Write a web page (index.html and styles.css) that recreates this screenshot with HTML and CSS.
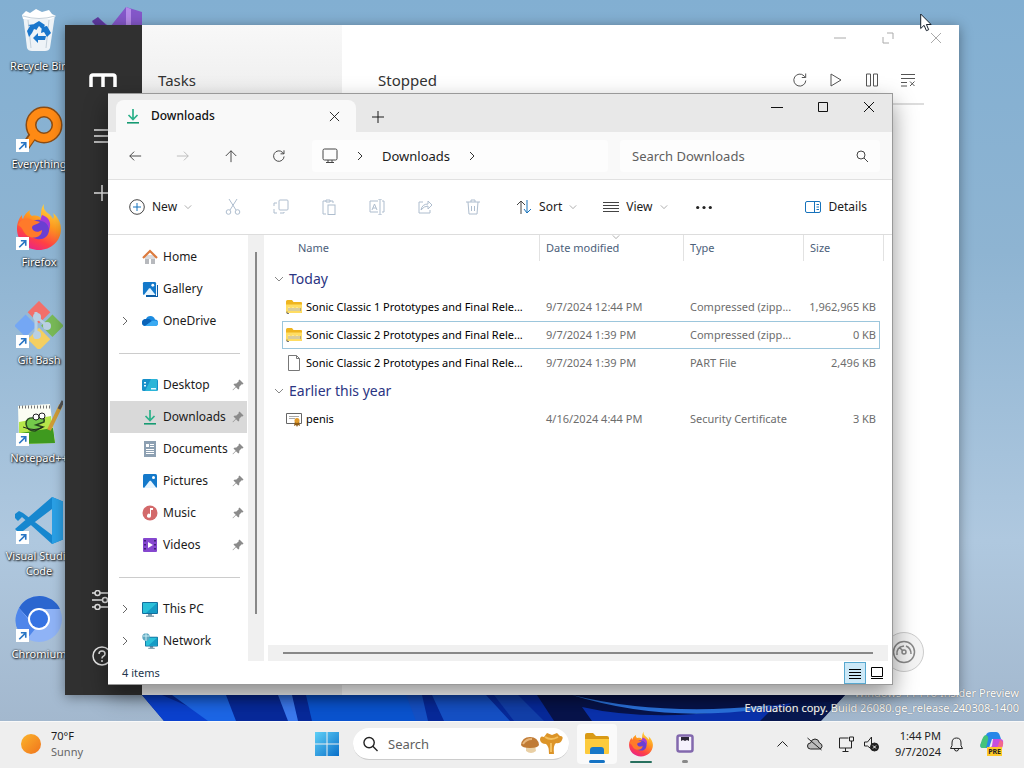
FILE: index.html
```html
<!DOCTYPE html>
<html lang="en">
<head>
<meta charset="utf-8">
<title>Downloads</title>
<link rel="stylesheet" href="styles.css">
</head>
<body>
<svg class="sprite" aria-hidden="true">
  <symbol id="shortcut" viewBox="0 0 12 12"><path fill="#fff" d="M0 0h12v12H0z"/><path d="M3 9.500 8.500 4M4.500 3.500H9V8" fill="none" stroke="#2a76c4" stroke-width="1.500"/></symbol>
  <symbol id="chev-right" viewBox="0 0 10 10"><path d="m3 1 4 4-4 4"/></symbol>
  <symbol id="chev-down" viewBox="0 0 10 10"><path d="m1 3 4 4 4-4"/></symbol>
  <symbol id="close" viewBox="0 0 12 12"><path d="m1 1 10 10M11 1 1 11"/></symbol>
  <symbol id="refresh" viewBox="0 0 16 16"><path d="M13.800 8.500A6 6 0 1 1 12 3.800l1.500 1.500M13.700 1.500v4H9.800"/></symbol>
  <symbol id="pin" viewBox="0 0 12 12"><path d="M7.500.5 11.500 4.500 10.500 5.500 9.700 5.300 7.300 7.700 7.200 9.800 6.300 10.500 4 8.200 1 11.300.5 11 3.700 7.800 1.500 5.600 2.200 4.700 4.400 4.600 6.800 2.200 6.500 1.500Z" fill="#8b8b8b"/></symbol>
  <symbol id="download" viewBox="0 0 16 16"><path d="M8 1v10M3.500 7 8 11.500 12.500 7" fill="none" stroke="#2cb18a" stroke-width="1.700"/><path d="M2 14h12v1.600H2z" fill="#169a72"/></symbol>
  <symbol id="picture" viewBox="0 0 16 16"><rect x="1" y="1" width="14" height="14" rx="1.500" fill="#1479ca"/><path d="m2 15 5.500-7c.5-.5 1-.5 1.500 0l5.500 7z" fill="#e6f5ff"/><circle cx="11.500" cy="4.500" r="1.500" fill="#fff"/></symbol>
  <symbol id="zip" viewBox="0 0 16 16"><path d="M0 2.500Q0 1 1.500 1H6l1.500 2H15q1 0 1 1v9q0 1-1 1H1q-1 0-1-1z" fill="#efb51f"/><path d="M0 5.500h16V13q0 1-1 1H1q-1 0-1-1z" fill="#ffdd63"/><path d="M2 9h13v3H2z" fill="#b3a67f"/><path d="M3 8v4M5 9v3M7 8v4M9 9v3M11 8v4M13 9v3" stroke="#fff2b8"/><path d="M1 12.500v2h2" stroke="#777" fill="none"/></symbol>
  <symbol id="monitor" viewBox="0 0 16 16"><path d="M6 12h4v3H6z" fill="#7896a8"/><path d="M4 14.500h8V16H4z" fill="#8aa4b2"/><rect width="16" height="12" y="1" rx="1" fill="#136f9e"/><path d="M1 2h14v10H1z" fill="#2bc0d9"/><path d="M15 2v10H4z" fill="#169bc5"/></symbol>
  <symbol id="firefox" viewBox="0 0 48 48"><defs><linearGradient id="ff" x1=".8" y1="0" x2=".3" y2="1"><stop offset="0" stop-color="#ffe04a"/><stop offset=".4" stop-color="#ff9a1f"/><stop offset=".75" stop-color="#ff4144"/><stop offset="1" stop-color="#e8238a"/></linearGradient></defs><path d="M29 1c-1 5 1 7 5 10 2 2 3 3 4 5 1-2 1-4 0-6 5 4 8 10 8 16 0 12-10 21-22 21S2 38 2 26c0-6 2-11 5-14 0 2 0 3 1 4 1-4 4-7 7-9-1 3 0 5 2 6 4-1 7 0 9 2 0-6 0-10 3-14Z" fill="url(#ff)"/><path d="M14 27c0-7 5-11 11-10 7 1 10 6 9 11-1 6-6 9-12 8-5-1-8-5-8-9Z" fill="#6a3fd2"/><path d="M3 22c3-6 9-8 14-5 3 1 6 1 8 2-3 3-8 2-8 6 1 4 6 5 10 2 0 6-6 9-12 7C8 32 9 25 3 22Z" fill="#ff7a2a"/><path d="M25 18c6 0 9 5 9 9 3-7 0-13-7-15Z" fill="#a33bd8"/></symbol>
</svg>

<main class="desktop">
  <svg class="bloom" viewBox="0 0 703 60" preserveAspectRatio="none" aria-hidden="true">
    <path d="M0 34h703L678 60H22Z" fill="#07299a"/>
    <path d="M0 34h20l60 26H22Z" fill="#0b41cf"/><path d="M30 34h54l10 26H66Z" fill="#1c66e6"/>
    <path d="M136 34h14l6 26h-10Z" fill="#3b79ee"/><path d="M164 34h110l10 26H170Z" fill="#0a53cf"/>
    <path d="m264 34 10 26h12l-6-26ZM290 34l12 26h66l-24-26Z" fill="#1550c5"/><path d="m352 34 20 26h30l-26-26Z" fill="#123fa9"/>
    <path d="M395 34h308l-24 26H412Z" fill="#07134a"/><path d="M440 46q60 14 150 4l60-8-30 18H450Z" fill="#0a31ac"/><path d="M430 34q90 22 200 10l-10 4q-100 14-190-14Z" fill="#2a72dc"/>
    <path d="M630 48q30-6 66-8l-18 20h-60z" fill="#081850"/>
  </svg>

  <nav class="shortcuts" aria-label="Desktop">
    <a href="#" class="shortcut"><svg viewBox="0 0 48 48"><path d="m8 8 4 33q1 3 5 3h13q4 0 5-3l5-33Z" fill="#eef3f7"/><path d="m7 8 4-4 4 2 6-4 6 3 7-2 3 4 4 2-5 3H8Z" fill="#fff"/><path d="M8 9q16 5 32 0M13 13l3 28M34 13l-3 28" stroke="#c4d0da" fill="none"/><g fill="#1976cc"><path d="m19 17 5-3 6 4-3 4-3-3-2 3-4-2ZM32 19l4 7-4 4-3-5-3 1 1-6ZM30 33h-7v3l-5-5 5-5v3h8ZM14 30l-2-6 3-5-2-1 7-1 2 6-3-1-2 4Z"/></g></svg><span>Recycle Bin</span></a>
    <a href="#" class="shortcut"><svg viewBox="0 0 48 48"><circle cx="29" cy="20" r="13" fill="none" stroke="#8a4c14" stroke-width="11"/><path d="m19 29-9 13" stroke="#8a4c14" stroke-width="9"/><circle cx="29" cy="20" r="13" fill="none" stroke="#ff8a14" stroke-width="8"/><path d="m21 27-10 14" stroke="#ff8a14" stroke-width="6"/><use href="#shortcut" x="1" y="34" width="13" height="13"/></svg><span>Everything</span></a>
    <a href="#" class="shortcut"><svg viewBox="0 0 48 48"><use href="#firefox"/><use href="#shortcut" x="1" y="34" width="13" height="13"/></svg><span>Firefox</span></a>
    <a href="#" class="shortcut"><svg viewBox="0 0 48 48"><g transform="rotate(45 24 24)"><path d="M7 7h16v16H7z" fill="#f26f6a"/><path d="M26 7h16v16H26z" fill="#78b957"/><path d="M7 26h16v16H7z" fill="#74a7f4"/><path d="M26 26h16v16H26z" fill="#f4cf61"/></g><path d="M21 11v27M23 17l9 8" stroke="#b9cfe2" stroke-width="3"/><circle cx="22" cy="16" r="4" fill="#b9cfe2"/><circle cx="22" cy="34" r="4" fill="#b9cfe2"/><circle cx="32" cy="25" r="4" fill="#b9cfe2"/><use href="#shortcut" x="1" y="34" width="13" height="13"/></svg><span>Git Bash</span></a>
    <a href="#" class="shortcut"><svg viewBox="0 0 48 48"><path d="m3 7 32-2 5 38-36 2Z" fill="#fbfdf3"/><path d="m4 23 32-6 4 27-36 1Z" fill="#b6e64a"/><path d="m5 34 33-5 2 15-36 1Z" fill="#3f9a1f"/><path d="M4 8h31" stroke="#777" stroke-dasharray="1 2" stroke-width="3"/><path d="M11 25q0-7 8-6l6-2q5 1 4 6l-8 3 7 2-8 4q-8 0-9-7Z" fill="#74c94b" stroke="#26481f" stroke-width="1.500"/><path d="M8 28q12 5 20 0" stroke="#222" fill="none"/><circle cx="21" cy="18" r="3" fill="#fff" stroke="#222"/><circle cx="27" cy="17" r="3" fill="#fff" stroke="#222"/><path d="M46 6 34 31" stroke="#cf9c36" stroke-width="4"/><path d="m48 2-4 8" stroke="#555" stroke-width="3"/><use href="#shortcut" x="1" y="34" width="13" height="13"/></svg><span>Notepad++</span></a>
    <a href="#" class="shortcut"><svg viewBox="0 0 48 48"><path d="m37 0 12 5v37l-12 5L7 20l-4 4-3-3v-4l4-3 4 2 29 22V12L8 34l-4 2-4-4 37-32Z" fill="#1687cf"/><path d="m37 0 12 5v37l-12 5Z" fill="#2aa0e6"/><use href="#shortcut" x="1" y="34" width="13" height="13"/></svg><span>Visual Studio Code</span></a>
    <a href="#" class="shortcut"><svg viewBox="0 0 48 48"><circle cx="24" cy="24" r="23" fill="#8fb3f6"/><path d="M4 13A23 23 0 0 1 45 14H24Q15 15 14 24Z" fill="#2b66cf"/><path d="M4 13Q-6 32 12 44l8-10q-6-3-7-10Z" fill="#4f86ea"/><circle cx="24" cy="24" r="11" fill="#fff"/><circle cx="24" cy="24" r="9" fill="#3673e2"/><use href="#shortcut" x="1" y="34" width="13" height="13"/></svg><span>Chromium</span></a>
  </nav>
  <svg class="vs-icon" viewBox="0 0 50 48" aria-hidden="true"><path d="m34 0 16 5v38l-16 5L0 15l6-4 12 9Z" fill="#8457c9"/><path d="m34 0 5 2v46l-5-2Z" fill="#b58ae8"/><path d="m0 14 6-4 8 8-6 6Z" fill="#5e3aa0"/></svg>

  <p class="watermark">Windows 11 Pro Insider Preview<br>Evaluation copy. Build 26080.ge_release.240308-1400</p>

  <section class="window manager" aria-label="Tasks">
    <aside class="rail">
      <svg class="rail-logo" viewBox="0 0 28 14"><path d="M2 14V4q0-2 2-2h20q2 0 2 2v10M14 2v12" fill="none" stroke="#fff" stroke-width="3.500"/></svg>
      <button type="button" aria-label="Menu"><svg viewBox="0 0 16 16"><path d="M0 2h16M0 8h16M0 14h16"/></svg></button>
      <button type="button" aria-label="Add"><svg viewBox="0 0 16 16"><path d="M8 0v16M0 8h16"/></svg></button>
      <button type="button" class="push" aria-label="Options"><svg viewBox="0 0 20 20"><path d="M0 3h3m5 0h12M0 10h10m6 0h4M0 17h3m5 0h12"/><circle cx="5.500" cy="3" r="2.500"/><circle cx="13" cy="10" r="2.500"/><circle cx="5.500" cy="17" r="2.500"/></svg></button>
      <button type="button" aria-label="Help"><svg viewBox="0 0 20 20"><circle cx="10" cy="10" r="9"/><path d="M7 8q0-3 3-3t3 3q0 1.500-2 2.500-1 .5-1 2M10 14v2"/></svg></button>
    </aside>
    <div class="task-panel"><h2>Tasks</h2></div>
    <div class="task-main">
      <div class="manager-caption">
        <button type="button" aria-label="Minimize"><svg viewBox="0 0 12 12"><path d="M0 6h12"/></svg></button>
        <button type="button" aria-label="Restore"><svg viewBox="0 0 12 12"><path d="M5 1h6v6M1 5v6h6"/></svg></button>
        <button type="button" aria-label="Close"><svg viewBox="0 0 12 12"><use href="#close"/></svg></button>
      </div>
      <div class="task-head">
        <h2>Stopped</h2>
        <button type="button" aria-label="Refresh"><svg viewBox="0 0 16 16"><use href="#refresh"/></svg></button>
        <button type="button" aria-label="Start"><svg viewBox="0 0 16 16"><path d="m3 2 10 6-10 6Z"/></svg></button>
        <button type="button" aria-label="Pause"><svg viewBox="0 0 16 16"><path d="M2.500 2h4v12h-4zM9.500 2h4v12h-4z"/></svg></button>
        <button type="button" aria-label="Clear list"><svg viewBox="0 0 16 16"><path d="M1 2.500h14M1 6.500h14M1 10.500h6M1 14h6M10 9.500l4.500 4.500m0-4.500L10 14"/></svg></button>
      </div>
      <button type="button" class="speed" aria-label="Speed"><svg viewBox="0 0 24 24"><circle cx="12" cy="12" r="10.500"/><path d="M5 15q-1-8 7-9M14 6q5 2 5 8M7 7l4 4"/><circle cx="12" cy="12" r="2"/></svg></button>
    </div>
  </section>

  <section class="window explorer" aria-label="Downloads">
    <header class="tabbar">
      <div class="tab"><svg class="ico"><use href="#download"/></svg><h1>Downloads</h1><button type="button" aria-label="Close tab"><svg viewBox="0 0 12 12"><use href="#close"/></svg></button></div>
      <button type="button" class="new-tab" aria-label="New tab"><svg viewBox="0 0 12 12"><path d="M6 0v12M0 6h12"/></svg></button>
      <div class="caption">
        <button type="button" aria-label="Minimize"><svg viewBox="0 0 12 12"><path d="M0 6.500h12"/></svg></button>
        <button type="button" aria-label="Maximize"><svg viewBox="0 0 12 12"><path d="M1.500 1.500h9v9h-9z"/></svg></button>
        <button type="button" aria-label="Close"><svg viewBox="0 0 12 12"><use href="#close"/></svg></button>
      </div>
    </header>
    <div class="navbar">
      <div class="nav-buttons">
        <button type="button" aria-label="Back"><svg viewBox="0 0 16 16"><path d="M15 8H2M7 3 2 8l5 5"/></svg></button>
        <button type="button" class="off" aria-label="Forward" disabled><svg viewBox="0 0 16 16"><path d="M1 8h13M9 3l5 5-5 5"/></svg></button>
        <button type="button" aria-label="Up"><svg viewBox="0 0 16 16"><path d="M8 15V2M2 8l6-6 6 6"/></svg></button>
        <button type="button" aria-label="Refresh"><svg viewBox="0 0 16 16"><use href="#refresh"/></svg></button>
      </div>
      <div class="address">
        <svg class="ico line" viewBox="0 0 16 16"><rect x="1" y="1" width="14" height="11" rx="1.500"/><path d="M6 12v2.500M10 12v2.500M4 14.500h8"/></svg>
        <svg class="chev"><use href="#chev-right"/></svg>
        <a href="#">Downloads</a>
        <svg class="chev"><use href="#chev-right"/></svg>
      </div>
      <label class="search"><input type="text" placeholder="Search Downloads" aria-label="Search Downloads"><svg viewBox="0 0 12 12"><circle cx="5" cy="5" r="4"/><path d="m8 8 4 4"/></svg></label>
    </div>
    <div class="toolbar">
      <button type="button" class="new"><svg class="ico line" viewBox="0 0 16 16"><circle cx="8" cy="8" r="7.300"/><path d="M8 4v8M4 8h8" stroke="#1672bb"/></svg>New<svg class="caret"><use href="#chev-down"/></svg></button>
      <div class="edit-tools">
        <button type="button" disabled aria-label="Cut"><svg viewBox="0 0 16 16"><path d="M4 0 11 11M12 0 5 11"/><circle cx="3.500" cy="13" r="2.300"/><circle cx="12.500" cy="13" r="2.300"/></svg></button>
        <button type="button" disabled aria-label="Copy"><svg viewBox="0 0 16 16"><rect x="6" y="1" width="9" height="10" rx="1"/><path d="M4 4H1v3m0 3v4h3m3 0h4v-1"/></svg></button>
        <button type="button" disabled aria-label="Paste"><svg viewBox="0 0 16 16"><path d="M5 15H2V2h3m4 0h3v2M5 1h4v2H5z"/><rect x="7" y="6" width="7" height="9.500"/></svg></button>
        <button type="button" disabled aria-label="Rename"><svg viewBox="0 0 16 16"><path d="M9 2H1v11h8M13 2h2v11h-2M11 0v16M9 0h4M9 16h4M3 11l2.500-6L8 11M4 9h3"/></svg></button>
        <button type="button" disabled aria-label="Share"><svg viewBox="0 0 16 16"><path d="M6 3H2v11h11v-3M4 11q1-6 7-6V2l4 4-4 4V7Q7 7 4 11Z"/></svg></button>
        <button type="button" disabled aria-label="Delete"><svg viewBox="0 0 16 16"><path d="M1 3h14M6 3V1h4v2M3 3l1 12h8l1-12M6.500 7v5M9.500 7v5"/></svg></button>
      </div>
      <button type="button" class="sort"><svg class="ico line" viewBox="0 0 16 16"><path d="M5 15V2M1 6l4-4 4 4"/><path d="M11 1v13m-3-4 3 4 4-4" stroke="#1672bb"/></svg>Sort<svg class="caret"><use href="#chev-down"/></svg></button>
      <button type="button" class="view"><svg class="ico line" viewBox="0 0 16 16"><path d="M0 3.500h16M0 6.500h16M0 9.500h16M0 12.500h16"/></svg>View<svg class="caret"><use href="#chev-down"/></svg></button>
      <button type="button" class="more" aria-label="More"><svg class="ico" viewBox="0 0 16 16"><circle cx="1.700" cy="8.500" r="1.600"/><circle cx="8" cy="8.500" r="1.600"/><circle cx="14.300" cy="8.500" r="1.600"/></svg></button>
      <button type="button" class="details"><svg class="ico line" viewBox="0 0 16 16"><rect x=".5" y="2.500" width="15" height="11" rx="1.500" stroke="#1672bb"/><path d="M9.500 2.500v11M11.500 5.500h2.500M11.500 8h2.500M11.500 10.500h2.500" stroke="#1672bb"/></svg>Details</button>
    </div>
    <div class="body">
      <nav class="places" aria-label="Places">
        <a href="#"><i></i><svg class="ico"><path d="M3 8h4v7H3zM9 8h4v7H9z" fill="#b7b9bd"/><path d="M3 6h10v4H3z" fill="#d9dadd"/><path d="m1 9 7-7 7 7" fill="none" stroke="#dc7b3e" stroke-width="2.200"/></svg>Home</a>
        <a href="#"><i></i><svg class="ico" viewBox="0 0 16 16"><path d="M4 4h12v12H4z" fill="#0b5ca5"/><path d="M14 0h1v15h-1z" fill="#fff"/><use href="#picture" width="15" height="15"/></svg>Gallery</a>
        <a href="#"><svg class="chev"><use href="#chev-right"/></svg><svg class="ico"><path d="M4 13q-4 0-4-3.500Q0 6 4 6q1-3 4.500-3T13 6.500q3 0 3 3.200T13 13Z" fill="#1b8be0"/><path d="M4 6q3-1 6 2l-7 5q-3-.5-3-3.500Q.5 6 4 6Z" fill="#0a63b8"/><path d="M3 13 10 8q6-1 6 2t-3 3Z" fill="#3aaaf2"/></svg>OneDrive</a>
        <hr>
        <a href="#"><i></i><svg class="ico"><rect y="2" width="16" height="12" rx="1.500" fill="#168fc9"/><path d="M9 2h6v12H3Z" fill="#2bb5d8"/><path d="M2 5h2v1.500H2zM2 8h2v1.500H2zM9 11h5v1.500H9z" fill="#e5f8ff"/></svg>Desktop<svg class="pin"><use href="#pin"/></svg></a>
        <a href="#" class="current"><i></i><svg class="ico"><use href="#download"/></svg>Downloads<svg class="pin"><use href="#pin"/></svg></a>
        <a href="#"><i></i><svg class="ico"><path d="M2 0h12v16H2z" fill="#8da0b2"/><path d="M4 3h3v3H4zM8 3h4v1H8zM8 5h4v1H8zM4 8h8v1H4zM4 10h8v1H4zM4 12h8v1H4z" fill="#fff"/></svg>Documents<svg class="pin"><use href="#pin"/></svg></a>
        <a href="#"><i></i><svg class="ico"><use href="#picture"/></svg>Pictures<svg class="pin"><use href="#pin"/></svg></a>
        <a href="#"><i></i><svg class="ico"><circle cx="8" cy="8" r="7.500" fill="#d3696a"/><path d="M8 3h3v2H9v5.500a2 2 0 1 1-1-1.500Z" fill="#fff"/></svg>Music<svg class="pin"><use href="#pin"/></svg></a>
        <a href="#"><i></i><svg class="ico"><rect x="1" y="1" width="14" height="14" rx="1" fill="#8547cf"/><path d="M2 3h2v1.500H2zM2 7h2v1.500H2zM2 11h2v1.500H2zM12 3h2v1.500h-2zM12 7h2v1.500h-2zM12 11h2v1.500h-2z" fill="#402079"/><path d="m6 5 5 3-5 3Z" fill="#fff"/></svg>Videos<svg class="pin"><use href="#pin"/></svg></a>
        <hr>
        <a href="#"><svg class="chev"><use href="#chev-right"/></svg><svg class="ico"><use href="#monitor"/></svg>This PC</a>
        <a href="#"><svg class="chev"><use href="#chev-right"/></svg><svg class="ico" viewBox="0 0 16 16"><use href="#monitor" x="3" y="3" width="13" height="13"/><circle cx="4" cy="4" r="3.700" fill="#5fa7c0"/><path d="M1 3h6M4 0v8" stroke="#c9edf4"/></svg>Network</a>
      </nav>
      <div class="vscroll"><span></span></div>
      <div class="files">
        <table>
          <colgroup><col class="c-gutter"><col><col class="c-date"><col class="c-type"><col class="c-size"><col class="c-end"></colgroup>
          <thead><tr><td></td><th scope="col" class="h-name">Name</th><th scope="col" class="sorted">Date modified<svg class="caret"><use href="#chev-down"/></svg></th><th scope="col">Type</th><th scope="col">Size</th><td class="edge"></td></tr></thead>
          <tbody>
            <tr class="group"><th colspan="6"><button type="button"><svg class="chev"><use href="#chev-down"/></svg>Today</button></th></tr>
            <tr><td></td><td class="name"><div><svg class="ico"><use href="#zip"/></svg>Sonic Classic 1 Prototypes and Final Rele...</div></td><td>9/7/2024 12:44 PM</td><td>Compressed (zipp...</td><td class="size">1,962,965 KB</td><td></td></tr>
            <tr class="focused"><td></td><td class="name"><div><svg class="ico"><use href="#zip"/></svg>Sonic Classic 2 Prototypes and Final Rele...</div></td><td>9/7/2024 1:39 PM</td><td>Compressed (zipp...</td><td class="size">0 KB</td><td></td></tr>
            <tr><td></td><td class="name"><div><svg class="ico"><path d="M2.500.5h8l3 3v12h-11zM10.500.5v3h3" fill="#fff" stroke="#777"/></svg>Sonic Classic 2 Prototypes and Final Rele...</div></td><td>9/7/2024 1:39 PM</td><td>PART File</td><td class="size">2,496 KB</td><td></td></tr>
            <tr class="group"><th colspan="6"><button type="button"><svg class="chev"><use href="#chev-down"/></svg>Earlier this year</button></th></tr>
            <tr><td></td><td class="name"><div><svg class="ico"><path d="M.5 2.500h15v10H.5z" fill="#fff" stroke="#666"/><path d="M3 5.500h10M3 7.500h6" stroke="#aaa"/><path d="m9 10-1 5 2-1 1 2 1-2 2 1-1-5Z" fill="#8d5b16"/><circle cx="11" cy="9.500" r="2.500" fill="#e09a2b"/></svg>penis</div></td><td>4/16/2024 4:44 PM</td><td>Security Certificate</td><td class="size">3 KB</td><td></td></tr>
          </tbody>
        </table>
        <div class="hscroll"><span></span></div>
      </div>
    </div>
    <footer class="status"><span>4 items</span>
      <button type="button" class="on" aria-label="Details view"><svg viewBox="0 0 14 14"><path d="M1 3.500h12M1 6.500h12M1 9.500h12M1 12.500h12"/></svg></button>
      <button type="button" aria-label="Large icons"><svg viewBox="0 0 14 14"><path d="M1.500 1.500h11v9h-11zM1 12.500h12"/></svg></button>
    </footer>
  </section>

  <svg class="cursor" viewBox="0 0 12 19" aria-hidden="true"><path d="M.7 1v14.500l3.400-3.200 2.300 5.400 2.300-1-2.300-5.200h4.700Z" fill="#fff" stroke="#16202c"/></svg>
</main>

<footer class="taskbar">
  <a href="#" class="weather"><svg viewBox="0 0 20 20"><defs><linearGradient id="sun" x2="1" y2="1"><stop stop-color="#fbb52c"/><stop offset="1" stop-color="#f0731c"/></linearGradient></defs><circle cx="10" cy="10" r="10" fill="url(#sun)"/></svg><span>70°F<small>Sunny</small></span></a>
  <div class="apps">
    <button type="button" class="start" aria-label="Start"><svg viewBox="0 0 24 24"><defs><linearGradient id="win" x2="1" y2="1"><stop stop-color="#5fd0f7"/><stop offset="1" stop-color="#0a6fc9"/></linearGradient></defs><path d="M0 0h11.500v11.500H0zM12.500 0H24v11.500H12.500zM0 12.500h11.500V24H0zM12.500 12.500H24V24H12.500z" fill="url(#win)"/></svg></button>
    <label class="tb-search"><svg viewBox="0 0 16 16"><circle cx="6.500" cy="6.500" r="5.500"/><path d="m10.500 10.500 5 5"/></svg><input type="text" placeholder="Search" aria-label="Search"><svg class="mushrooms" viewBox="0 0 44 24"><path d="M6 13h9l1 6q-5 4-10 0Z" fill="#e9cfa4"/><path d="M1 13Q2 5 10 5t9 8q-1 3-9 3t-9-3Z" fill="#c07b35"/><path d="M3 12q3-5 9-5" stroke="#e8b67a" fill="none" stroke-width="2"/><path d="M20 8q0-5 4-3l3-4 5 2 5-2 3 3q4 0 2 4t-6 3q-3 2-2 11h-5q0-8-3-10-5 0-6-4Z" fill="#dc9428"/><path d="M31 11v9M25 5q6 4 13 0" stroke="#f4bf5c" fill="none" stroke-width="2"/></svg></label>
    <button type="button" class="app active" aria-label="File Explorer"><svg viewBox="0 0 26 26"><path d="M1 4q0-2 2-2h6l3 3h11q2 0 2 2v4H1z" fill="#d99a16"/><path d="M1 8h24v14q0 1-1 1H2q-1 0-1-1z" fill="#fdcb3d"/><path d="M6 23v-4q0-3 3-3h8q3 0 3 3v4z" fill="#1878c8"/></svg></button>
    <button type="button" class="app running" aria-label="Firefox"><svg viewBox="0 0 48 48"><use href="#firefox"/></svg></button>
    <button type="button" class="app idle" aria-label="Download manager"><svg viewBox="0 0 26 26"><rect x="5.500" y="4.500" width="15" height="16" rx="2" fill="#f6f2fc" stroke="#8268ad" stroke-width="2.500"/><path d="M9 6h8v4l-2-1-2 1-2-1-2 1z" fill="#2c2736"/></svg></button>
  </div>
  <div class="tray">
    <button type="button" aria-label="Show hidden icons"><svg viewBox="0 0 16 16"><path d="m3 10.500 5-5 5 5"/></svg></button>
    <button type="button" aria-label="Cloud sync off"><svg viewBox="0 0 16 16"><path d="M4 13q-3 0-3-3t3-3q1-4 4.500-4T13 7q3 1 2.500 3.500T13 13Z" fill="#bbb"/><path d="m1 2 14 12"/></svg></button>
    <div class="net"><svg viewBox="0 0 16 16"><path d="M10 2H1v10h12V8M7 12v3M4 15.500h6M11 1h4v4h-4zM13 5v4"/></svg><svg viewBox="0 0 16 16"><path d="M8 1v12L4 10H1V6h3Z"/><circle cx="11" cy="11" r="4" fill="#222"/><path d="m9.500 9.500 3 3m0-3-3 3" stroke="#fff"/></svg></div>
    <time datetime="2024-09-07T13:44">1:44 PM<br>9/7/2024</time>
    <button type="button" aria-label="Notifications"><svg viewBox="0 0 16 16"><path d="M2 12.500h12l-1.500-3V7Q12.500 2 8 2T3.500 7v2.500ZM6 13q0 2 2 2t2-2"/></svg></button>
    <button type="button" class="copilot" aria-label="Copilot preview"><svg viewBox="0 0 24 24"><path d="M6 3q1-3 5-3h5q3 0 4 4l1 3h-9L9 16H3q-4 0-2-5Z" fill="#2787e8"/><path d="M1 11q2-8 5-8 3 1 2 5l-2 8H3q-4 0-2-5Z" fill="#44c37a"/><path d="M13 7h7q4 0 3 5l-2 7q-1 4-5 4h-5q-3 0-4-4l5-5Z" fill="#c64fe0"/><path d="M20 8q4 1 3 5l-2 6H11l6-3Z" fill="#f3688d"/></svg><b>PRE</b></button>
  </div>
</footer>
</body>
</html>
```
FILE: styles.css
```css
* { box-sizing: border-box; }
html, body { height: 100%; margin: 0; }
body {
  display: flex;
  flex-direction: column;
  overflow: hidden;
  font: 12px/16px "Noto Sans", "Open Sans", sans-serif;
  color: #1b1b1b;
  background: #ededed;
}
button { border: 0; padding: 0; background: none; font: inherit; color: inherit; display: flex; align-items: center; justify-content: center; }
a { color: inherit; text-decoration: none; }
h1, h2, p { margin: 0; font-weight: 400; }
svg { flex: none; fill: none; stroke: none; }
button > svg { stroke: currentColor; width: 16px; height: 16px; }
.sprite { position: absolute; width: 0; height: 0; }
.ico { width: 16px; height: 16px; }
.line { stroke: #444; }
.chev { width: 10px; height: 10px; stroke: #666; }
.caret { width: 8px; height: 8px; stroke: #999; }

.desktop {
  flex: 1;
  position: relative;
  overflow: hidden;
  background: linear-gradient(180deg, #82afd2 0%, #8eb4d2 35%, #afc8df 75%, #a3b8ce 100%);
}
.bloom { position: absolute; left: 142px; right: 179px; bottom: 0; width: calc(100% - 321px); height: 60px; }
.shortcuts { display: flex; flex-direction: column; width: 78px; padding-top: 7px; }
.shortcut { height: 98px; display: flex; flex-direction: column; align-items: center; gap: 3px; color: #fff; font-size: 11px; line-height: 15px; text-align: center; text-shadow: 1px 1px 2px #000, 0 0 2px #000; }
.shortcut svg { width: 48px; height: 48px; }
.vs-icon { position: absolute; left: 92px; top: 7px; width: 50px; height: 48px; }
.watermark { position: absolute; right: 5px; bottom: 6px; color: #fff; font-size: 11px; line-height: 15px; text-align: right; text-shadow: 0 0 1px #555; }

.window { position: absolute; display: flex; }
.manager { left: 65px; top: 25px; right: 65px; bottom: 26px; background: #fff; box-shadow: 0 2px 12px rgba(0, 0, 0, .4); overflow: hidden; }
.rail { width: 77px; background: #303030; color: #e8e8e8; display: flex; flex-direction: column; align-items: center; padding: 48px 4px 29px 0; gap: 41px; }
.rail-logo { width: 28px; height: 14px; margin-left: 3px; }
.rail button svg { width: 20px; height: 16px; stroke-width: 1.500; }
.rail button:nth-of-type(n+3) svg { height: 20px; }
.rail .push { margin-top: auto; }
.rail button + .push + button { margin-top: -5px; }
.manager h2 { font-size: 15px; line-height: 22px; color: #333; }
.task-panel { width: 200px; padding: 44px 16px; background: linear-gradient(#f8f8f8, #ededed 80px); }
.task-main { flex: 1; display: flex; flex-direction: column; }
.manager-caption { display: flex; justify-content: flex-end; gap: 36px; height: 26px; padding-right: 17px; align-items: center; color: #aaa; }
.manager-caption svg { width: 12px; height: 12px; }
.task-head { display: flex; align-items: center; gap: 20px; height: 54px; margin: 0 35px 0 36px; padding: 5px 8px 0 0; border-bottom: 2px solid #ddd; color: #555; }
.task-head h2 { flex: 1; }
.speed { margin: auto 35px 23px auto; width: 40px; height: 40px; border: 1px solid #ccc; border-radius: 50%; color: #888; background: #f4f4f4; }
.speed svg { width: 24px; height: 24px; stroke-width: 1.500; }

.explorer { left: 108px; top: 93px; right: 131px; bottom: 36px; flex-direction: column; background: #fff; border: 1px solid #999; border-width: 1px 1px 1px 0; box-shadow: 0 10px 22px rgba(0, 0, 0, .42); }
.tabbar { display: flex; height: 38px; padding-left: 8px; background: #e8e8e8; }
.tab { display: flex; align-items: center; width: 240px; margin-top: 6px; padding: 0 16px 0 9px; gap: 10px; background: #f9f9f9; border-radius: 8px 8px 0 0; }
.tab h1 { flex: 1; font-size: 12px; font-weight: 500; color: #111; }
.tab button svg { width: 11px; height: 11px; }
.new-tab { margin: 8px 16px 0; }
.new-tab svg { width: 12px; height: 12px; }
.caption { display: flex; margin-left: auto; height: 26px; }
.caption button { width: 46px; color: #111; }
.caption svg { width: 12px; height: 12px; }
.navbar { display: flex; align-items: center; height: 48px; background: #f9f9f9; border-bottom: 1px solid #e1e1e1; padding: 0 12px 0 3px; }
.nav-buttons { display: flex; color: #333; }
.nav-buttons button { width: 48px; height: 32px; }
.nav-buttons svg { width: 14px; height: 14px; }
.nav-buttons .off { color: #b5b5b5; }
.address { flex: 1 1 296px; margin-left: 9px; height: 32px; display: flex; align-items: center; gap: 17px; padding-left: 10px; background: #fdfdfd; border-radius: 4px; font-size: 13px; }
.address .chev { stroke: #333; }
.search { flex: 1 1 260px; margin-left: 12px; height: 32px; display: flex; align-items: center; padding: 0 12px; background: #fdfdfd; border-radius: 4px; font-size: 13px; }
input { flex: 1; min-width: 0; border: 0; padding: 0; background: none; font: inherit; outline: 0; }
input::placeholder { color: #5f5f5f; opacity: 1; }
.search svg { width: 12px; height: 12px; stroke: #444; }
.toolbar { display: flex; align-items: center; height: 55px; padding: 0 25px 0 21px; border-bottom: 1px solid #ddd; }
.toolbar button { gap: 8px; }
.toolbar .new, .toolbar .sort, .toolbar .view { gap: 7px; }
.edit-tools { display: flex; gap: 32px; margin: 0 35px 0 33px; color: #aebdce; }
.view { margin-left: 26px; }
.more { margin-left: 28px; }
.more .ico { fill: #222; stroke: none; }
.toolbar .details { margin-left: auto; gap: 7px; }

.body { flex: 1; min-height: 0; display: flex; }
.places { width: 140px; padding-top: 6px; }
.places a { position: relative; display: flex; align-items: center; height: 32px; margin: 0 1px 0 2px; padding-left: 10px; }
.places a > i { width: 10px; }
.places .ico { margin: 0 5px 0 12px; }
.places hr { margin: 16px 8px 15px 11px; border: 0; border-top: 1px solid #ccc; }
.places .current { background: #d9d9d9; }
.pin { position: absolute; right: 3px; width: 12px; height: 12px; }
.vscroll { width: 16px; background: #f0f0f0; padding: 17px 7px 47px; }
.vscroll span { display: block; width: 2px; height: 100%; background: #888; }
.files { flex: 1; min-width: 0; display: flex; flex-direction: column; }
table { width: calc(100% - 18px); margin-left: 10px; table-layout: fixed; border-collapse: separate; border-spacing: 0; }
.c-gutter { width: 8px; }
.c-date { width: 144px; }
.c-type { width: 120px; }
.c-size { width: 77px; }
.c-end { width: 4px; }
th, td { padding: 0; height: 28px; text-align: left; font-weight: 400; white-space: nowrap; font-size: 11px; }
th:not([colspan]) { padding-left: 6px; }
td { padding-left: 7px; color: #6d6d6d; border: solid transparent; border-width: 1px 0; }
td:first-child, td:last-child { padding: 0; }
thead th, thead td { height: 26px; color: #4c607a; border: 0; }
thead th + th { border-left: 1px solid #e2e2e2; }
thead .edge { border-right: 1px solid #e2e2e2; }
thead th.h-name { padding-left: 16px; }
.sorted { position: relative; }
.sorted .caret { position: absolute; left: 50%; top: -2px; }
.group th { height: 28px; }
.group:first-child th { height: 32px; padding-top: 4px; }
.group button { gap: 5px; font-size: 14px; line-height: 20px; color: #2b3583; }
.group .chev { width: 10px; height: 10px; stroke: #888; }
td.name { padding-left: 3px; color: #000; border-left-width: 1px; }
.name div { display: flex; align-items: center; gap: 4px; }
td.size { text-align: right; padding: 0 3px 0 0; border-right-width: 1px; }
.focused td:not(:first-child):not(:last-child) { border-color: #9cc6dc; }
.hscroll { margin: auto 4px 0; height: 16px; padding: 7px 15px; background: #f0f0f0; }
.hscroll span { display: block; height: 2px; background: #888; }
.status { display: flex; align-items: center; height: 23px; padding: 0 4px 0 14px; color: #24364d; }
.status span { flex: 1; font-size: 11px; }
.status button { width: 22px; height: 22px; border: 1px solid transparent; color: #000; }
.status svg { width: 14px; height: 14px; }
.status .on { background: #cce8f7; border-color: #58a8cf; }

.cursor { position: absolute; left: 920px; top: 13px; width: 12px; height: 19px; }

.taskbar { display: grid; grid-template-columns: 1fr auto 1fr; align-items: center; height: 47px; padding: 0 20px 2px 21px; background: #eee; border-top: 1px solid #f9f9f9; }
.weather { display: flex; align-items: center; gap: 10px; font-size: 11px; }
.weather svg { width: 20px; height: 20px; }
.weather small { display: block; font-size: 11px; color: #666; }
.apps { display: flex; align-items: center; gap: 4px; padding-right: 11px; }
.start { width: 36px; height: 40px; }
.start svg { width: 24px; height: 24px; stroke: none; }
.tb-search { display: flex; align-items: center; gap: 10px; width: 216px; height: 32px; margin: 0 4px; padding: 0 5px 0 10px; border-radius: 16px; background: #fff; border-bottom: 1px solid #ccc; font-size: 13px; }
.tb-search svg { width: 15px; height: 16px; stroke: #222; stroke-width: 1.500; }
.tb-search .mushrooms { width: 44px; height: 24px; stroke: none; }
.app { position: relative; width: 40px; height: 40px; }
.app svg { width: 26px; height: 26px; stroke: none; }
.app::after { content: ""; position: absolute; bottom: 1px; width: 6px; height: 3px; border-radius: 2px; background: #888; }
.active { background: #fafafa; border-radius: 4px; }
.active::after { width: 16px; background: #1573c4; }
.running::after { width: 22px; height: 2px; background: #28705e; }
.tray { display: flex; justify-content: flex-end; align-items: center; gap: 15px; color: #222; }
.tray > button > svg, .net svg { width: 17px; height: 16px; stroke: currentColor; }
.net { display: flex; gap: 8px; }
time { font-size: 11px; text-align: right; }
.tray time + button { margin-left: -8px; }
.tray > .copilot { position: relative; }
.tray > .copilot > svg { width: 24px; height: 24px; stroke: none; }
.copilot b { position: absolute; bottom: 0; right: 2px; padding: 0 1px; background: #ffc928; font-size: 7px; line-height: 9px; }
```
